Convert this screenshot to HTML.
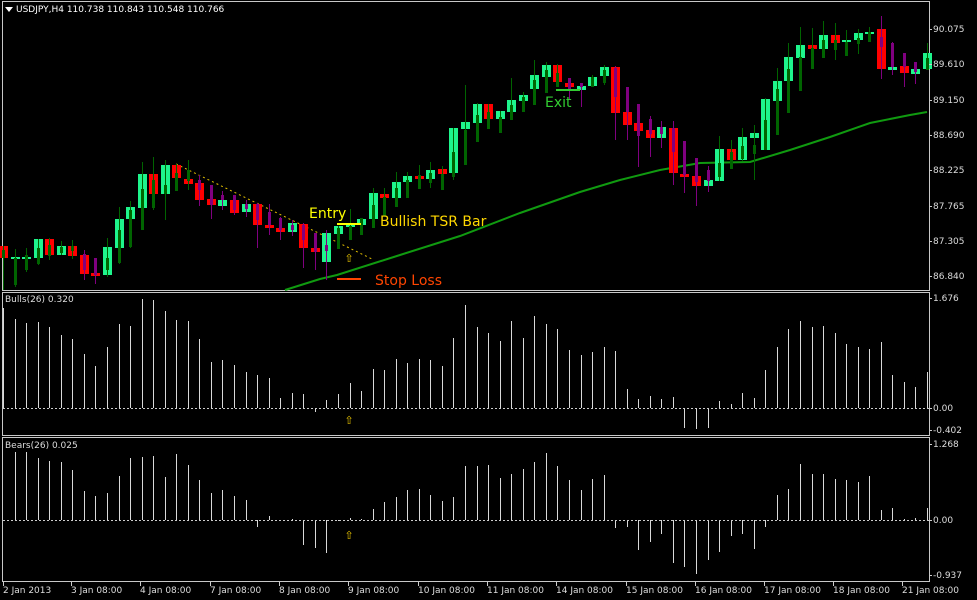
<!DOCTYPE html>
<html><head><meta charset="utf-8"><style>
html,body{margin:0;padding:0;background:#000;width:977px;height:600px;overflow:hidden}
svg{display:block}
text{font-family:"DejaVu Sans","Liberation Sans",sans-serif}
</style></head><body>
<svg id="s" width="977" height="600" xmlns="http://www.w3.org/2000/svg">
<rect width="977" height="600" fill="#000"/>
<g fill="none" stroke="#c8c8c8" stroke-width="1">
<rect x="2.5" y="1.5" width="927" height="289"/>
<rect x="2.5" y="292.5" width="927" height="143"/>
<rect x="2.5" y="437.5" width="927" height="144"/>
</g>
<line x1="176" y1="164" x2="372" y2="259" stroke="#e6c200" stroke-width="1" stroke-dasharray="2,3"/>
<polyline fill="none" stroke="#109a10" stroke-width="2" points="285,290 320,279 337,275 400,255 460,236 520,213 580,192 620,180 660,170 700,163 750,162 790,150 830,137 870,123 910,115 927,112"/>
<g id="cd"></g>
<g id="ind"></g>
<line x1="337" y1="224" x2="361" y2="224" stroke="#ffff00" stroke-width="2"/>
<line x1="337" y1="279" x2="361" y2="279" stroke="#ff4500" stroke-width="2"/>
<line x1="556" y1="90" x2="580" y2="90" stroke="#32cd32" stroke-width="2"/>
<text x="309" y="218" font-size="14" fill="#ffff00" font-family="Liberation Sans">Entry</text>
<text x="380" y="226" font-size="14" fill="#ffd700" font-family="Liberation Sans">Bullish TSR Bar</text>
<text x="375" y="285" font-size="14" fill="#ff4500" font-family="Liberation Sans">Stop Loss</text>
<text x="545" y="107" font-size="14" fill="#32cd32" font-family="Liberation Sans">Exit</text>
<text x="349" y="262" font-size="11" fill="#e6c200" text-anchor="middle">⇧</text>
<text x="349" y="424" font-size="11" fill="#e6c200" text-anchor="middle">⇧</text>
<text x="349" y="539" font-size="11" fill="#e6c200" text-anchor="middle">⇧</text>
<polygon points="5,7 13,7 9,12" fill="#fff"/>
<text x="16" y="12" font-size="9" fill="#fff">USDJPY,H4  110.738 110.843 110.548 110.766</text>
<text x="5" y="302" font-size="9" fill="#ddd">Bulls(26) 0.320</text>
<text x="5" y="448" font-size="9" fill="#ddd">Bears(26) 0.025</text>
<g font-size="9" fill="#ddd" id="ax"></g>
</svg>
<script>
var S='http://www.w3.org/2000/svg';
function el(p,t,a){var e=document.createElementNS(S,t);for(var k in a)e.setAttribute(k,a[k]);p.appendChild(e);return e;}
var D=[
[246,258,'r',250,258,'g',246,290],[257,258,'g',258,285,'g',249,287],[257,258,'g',255,270,'g',248,272],
[239,258,'g',248,264,'g',239,265],[239,255,'r',245,256,'g',238,260],[246,255,'g',247,253,'g',241,255],
[246,256,'r',246,251,'g',240,259],[255,274,'r',254,270,'p',250,280],[273,276,'r',258,275,'p',258,284],
[247,275,'g',258,270,'g',238,277],[219,248,'g',230,263,'g',207,264],[207,219,'g',210,247,'g',201,248],
[174,208,'g',189,230,'g',162,230],[174,194,'r',180,208,'g',157,210],[165,194,'g',185,194,'g',160,220],
[165,178,'r',173,191,'g',164,191],[179,184,'r',170,181,'g',160,190],[183,200,'r',180,190,'p',175,206],
[199,205,'r',185,205,'p',185,219],[200,206,'g',195,200,'p',191,210],[200,213,'r',195,210,'p',195,215],
[204,212,'g',204,209,'p',200,217],[204,225,'r',204,220,'p',203,248],[225,228,'r',212,225,'p',204,235],
[228,232,'r',218,230,'p',217,240],[223,232,'g',225,230,'p',220,236],[224,248,'r',225,240,'p',223,268],
[248,252,'r',233,252,'p',233,270],[233,262,'g',245,251,'p',230,280],[226,234,'g',228,249,'g',226,249],
[224,227,'g',226,240,'g',209,240],[219,225,'g',218,235,'g',218,235],[193,219,'g',205,228,'g',188,228],
[194,198,'r',197,216,'g',188,216],[182,198,'g',188,207,'g',172,207],[176,182,'g',180,198,'g',172,198],
[176,179,'r',175,189,'g',165,189],[170,179,'g',173,183,'g',162,188],[169,174,'r',174,190,'g',166,190],
[128,173,'g',152,177,'g',128,180],[122,129,'g',130,165,'g',85,165],[104,123,'g',115,142,'g',103,142],
[104,119,'r',112,129,'g',104,129],[111,119,'g',117,133,'g',111,133],[100,112,'g',105,120,'g',78,120],
[95,101,'g',97,112,'g',92,112],[75,89,'g',80,105,'g',60,105],[65,77,'g',70,93,'g',62,93],
[65,82,'r',73,87,'g',64,87],[83,87,'r',78,90,'p',78,100],[86,90,'g',83,87,'p',83,107],
[77,86,'g',77,87,'g',75,87],[67,76,'g',70,83,'g',65,85],[67,113,'r',68,97,'p',66,140],
[112,125,'r',87,112,'p',87,140],[123,131,'r',104,136,'p',104,167],[130,138,'r',119,134,'p',116,157],
[127,138,'g',127,134,'p',121,148],[128,173,'r',128,152,'p',121,185],[174,177,'r',141,175,'p',141,193],
[176,186,'r',158,182,'p',158,206],[180,186,'g',170,181,'p',166,192],[149,181,'g',163,177,'g',136,181],
[149,160,'r',152,169,'g',140,169],[137,160,'g',146,159,'g',128,161],[133,138,'g',145,154,'g',125,180],
[99,150,'g',120,150,'g',98,150],[81,101,'g',89,135,'g',68,135],[57,81,'g',69,113,'g',43,113],
[45,58,'g',57,91,'g',27,91],[45,49,'r',48,69,'g',28,69],[35,49,'g',40,58,'g',21,58],
[35,43,'r',40,50,'g',23,60],[40,42,'g',42,56,'g',30,56],[33,40,'g',38,44,'g',29,54],
[32,33,'g',32,42,'g',27,42],[29,69,'r',37,47,'p',16,79],[67,70,'g',43,67,'p',42,75],
[66,73,'r',53,67,'p',53,87],[69,74,'g',62,72,'p',62,84],[53,69,'g',58,70,'g',43,70]];
var B=[308,319,323,322,327,335,339,354,366,347,324,326,299,300,311,320,321,339,362,360,365,372,375,378,398,393,394,412,400,394,383,391,369,370,359,363,359,360,366,338,305,327,333,341,321,338,316,324,329,350,355,352,347,351,389,399,396,399,397,428,429,428,401,404,393,398,370,347,329,321,327,326,333,344,347,349,342,375,382,387,372];
var R=[520,452,452,458,461,462,470,491,496,493,476,458,457,456,477,454,465,480,493,490,496,500,527,516,521,519,545,548,553,520,518,519,509,502,497,490,489,495,501,497,466,466,465,478,474,469,462,453,466,480,490,479,475,528,527,550,542,534,563,567,574,560,552,536,534,549,527,495,489,464,474,474,479,480,482,476,510,508,519,518,508];
var cd=document.getElementById('cd'),ind=document.getElementById('ind');
var HG='#1ef58c',RD='#ff0000',DG='#006400',PU='#800080';
function X(i){return Math.round(3+i*11.55);}
for(var i=0;i<D.length;i++){var d=D[i],x=X(i);
 var hh=Math.max(2,d[1]-d[0]);
 el(cd,'rect',{x:x-4,y:d[0],width:9,height:hh,fill:d[2]=='g'?HG:RD});
 var c=d[5]=='g'?DG:PU;
 el(cd,'rect',{x:x,y:d[6],width:1,height:d[7]-d[6],fill:c});
 el(cd,'rect',{x:x-1,y:d[3],width:3,height:Math.max(2,d[4]-d[3]),fill:c});
 var b=B[i];el(ind,'rect',{x:x,y:Math.min(b,408),width:1,height:Math.max(1,Math.abs(b-408)),fill:'#d8d8d8'});
 var r=R[i];el(ind,'rect',{x:x,y:Math.min(r,520),width:1,height:Math.max(1,Math.abs(r-520)),fill:'#d8d8d8'});
}
el(ind,'line',{x1:3,y1:408.5,x2:929,y2:408.5,stroke:'#ccc','stroke-dasharray':'2,2'});
el(ind,'line',{x1:3,y1:520.5,x2:929,y2:520.5,stroke:'#ccc','stroke-dasharray':'2,2'});
var ax=document.getElementById('ax');
function T(x,y,s,a){var t=el(ax,'text',{x:x,y:y});t.textContent=s;if(a)t.setAttribute('text-anchor',a);}
var L=[['90.075',29],['89.610',64],['89.150',100],['88.690',135],['88.225',170],['87.765',206],['87.305',241],['86.840',276],['1.676',298],['0.00',408],['-0.402',430],['1.268',444],['0.00',520],['-0.937',575]];
L.forEach(function(l){T(933,l[1]+3,l[0]);el(ax,'line',{x1:929,y1:l[1]+.5,x2:932,y2:l[1]+.5,stroke:'#ccc'});});
var TL=[[3,'2 Jan 2013'],[71,'3 Jan 08:00'],[140,'4 Jan 08:00'],[210,'7 Jan 08:00'],[279,'8 Jan 08:00'],[348,'9 Jan 08:00'],[418,'10 Jan 08:00'],[487,'11 Jan 08:00'],[556,'14 Jan 08:00'],[626,'15 Jan 08:00'],[695,'16 Jan 08:00'],[764,'17 Jan 08:00'],[833,'18 Jan 08:00'],[902,'21 Jan 08:00']];
TL.forEach(function(t){T(t[0],593,t[1]);el(ax,'line',{x1:t[0]+.5,y1:582,x2:t[0]+.5,y2:586,stroke:'#ccc'});});
</script>
</body></html>
